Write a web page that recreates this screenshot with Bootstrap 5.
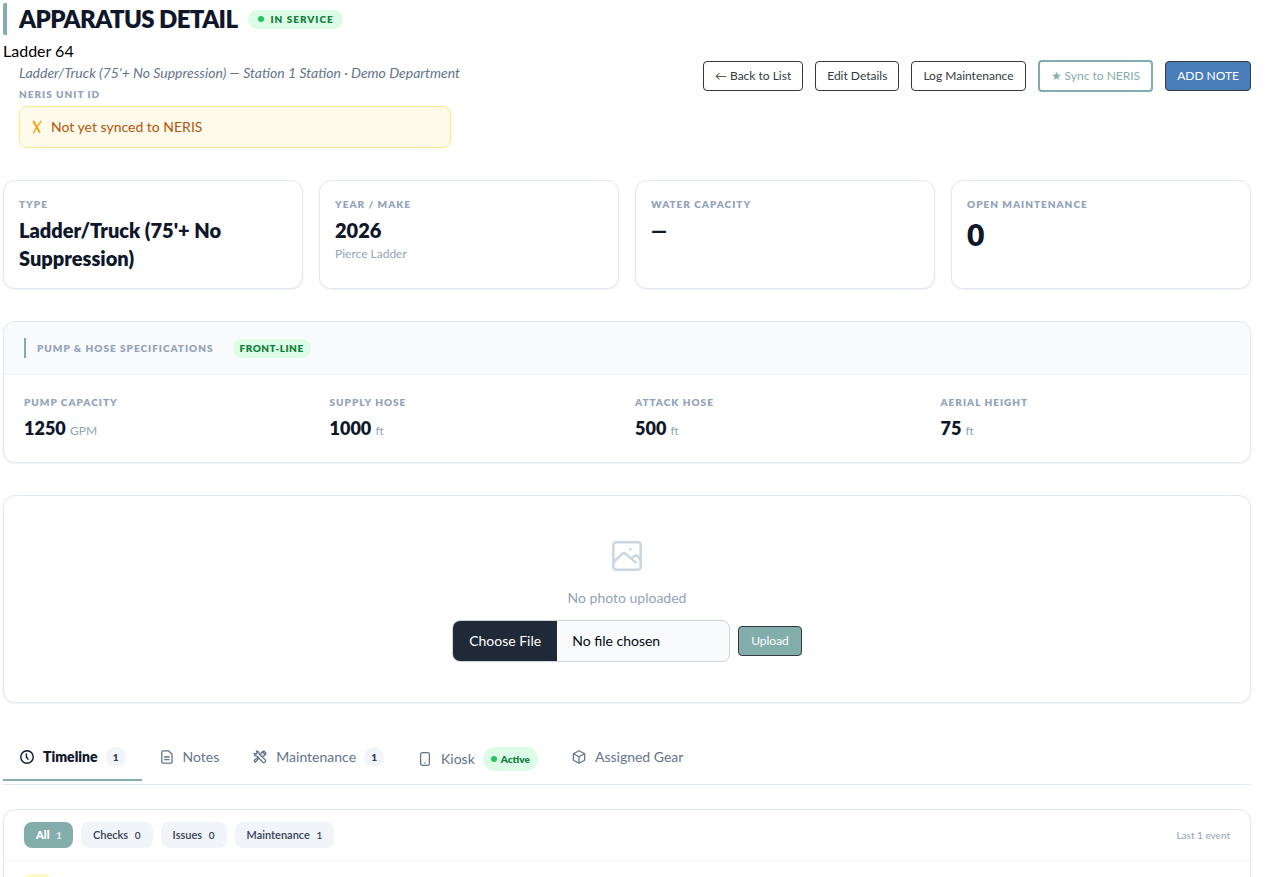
<!DOCTYPE html>
<html lang="en">
<head>
<meta charset="utf-8">
<meta name="viewport" content="width=device-width, initial-scale=1">
<title>Apparatus Detail</title>
<link href="https://cdn.jsdelivr.net/npm/bootstrap@5.3.0/dist/css/bootstrap.min.css" rel="stylesheet">
<style>
  :root { --teal: #83adab; --ink: #0f172a; --slate: #64748b; --muted: #94a3b8; --line: #e2e8f0; }
  body { font-family: Lato, "Liberation Sans", sans-serif; color: #000; height: 100vh; overflow: hidden; }
  .page { padding: 3px 32px 0 3px; height: 100vh; overflow: hidden; }
  .section-gap { margin-top: 32px; }

  .page-title { font-size: 24px; line-height: 32px; font-weight: 800; letter-spacing: -0.6px; color: var(--ink); }
  .title-row { border-left: 4px solid var(--teal); border-radius: 2px; padding-left: 12px; height: 32px; gap: 11px; }
  .indent { padding-left: 16px; }
  .unit-name { font-size: 16px; line-height: 24px; margin-top: 4px; }
  .subtitle { font-size: 14px; line-height: 20px; font-style: italic; color: var(--slate); white-space: nowrap; }
  .eyebrow { font-size: 10px; line-height: 15px; font-weight: 800; letter-spacing: 1px; text-transform: uppercase; color: var(--muted); }
  .pill { background: #dcfce7; color: #15803d; border-radius: 20px; font-weight: 800; font-size: 10px; line-height: 15px; }
  .status { letter-spacing: 1px; padding: 2px 9px 2px 10px; gap: 6px; }
  .dot { width: 6px; height: 6px; border-radius: 50%; background: #22c55e; flex: none; }
  .sync-note { background: #fffbeb; border: 1px solid #fde68a; border-radius: 8px; color: #b45309; font-size: 14px; line-height: 20px; padding: 10px 12px; margin-top: 4px; max-width: 432px; gap: 9px; }
  .actions { gap: 12px; }
  .act { font-size: 12px; line-height: 18px; border: 1px solid #343a40; border-radius: 4px; padding: 5px 12px; color: #343a40; background: #fff; }
  .actions .act { padding: 5px 11px; }
  .act-sync { border: 2px solid var(--teal); color: var(--teal); }
  .act-note { background: #4a7ebb; color: #fff; }
  .act-upload { background: var(--teal); color: #fff; }

  .panel { background: #fff; border: 1px solid var(--line); border-radius: 12px; box-shadow: 0 1px 2px rgba(0,0,0,.06); }
  .stats { gap: 16px; display: grid; grid-template-columns: repeat(4, minmax(0, 1fr)); }
  .stat { padding: 16px 15px; }
  .stat-value { font-size: 20px; line-height: 28px; font-weight: 800; color: var(--ink); margin-top: 4px; }
  .stat-big { font-size: 30px; line-height: 36px; }
  .stat-sub { font-size: 12px; line-height: 20px; color: var(--muted); }

  .spec-head { background: #f8fafc; border-bottom: 1px solid #f1f5f9; border-radius: 12px 12px 0 0; padding: 16px 20px; }
  .spec-title { border-left: 2px solid var(--teal); padding-left: 11px; line-height: 20px; margin-right: 19px; }
  .front { padding: 2px 7px; letter-spacing: .5px; }
  .spec-body { display: grid; grid-template-columns: repeat(4, minmax(0, 1fr)); gap: 16px; padding: 20px; }
  .spec-value { font-size: 18px; line-height: 28px; font-weight: 800; color: var(--ink); margin-top: 4px; }
  .spec-value span { font-size: 12px; font-weight: 400; color: var(--muted); line-height: 16px; }

  .photo { padding: 40px 0; }
  .photo-text { font-size: 14px; line-height: 20px; color: var(--muted); margin: 12px 0; }
  .file-pick { width: 278px; height: 42px; padding: 9px 16px; font-size: 14px; line-height: 22px; border: 1px solid #d1d5db; border-radius: 8px; background: #f8fafc; color: #030712; }
  .file-pick::file-selector-button { background: #1f2937 !important; color: #fff; padding: 9px 16px; margin: -9px 15px -9px -16px; border: 0; }

  .tab-bar { border-bottom: 1px solid var(--line); height: 50px; gap: 1px; }
  .tab { border: 0; border-bottom: 2px solid transparent; background: none; font-size: 14px; line-height: 20px; color: var(--slate); padding: 0 16px; height: 46px; display: flex; align-items: center; }
  .tab.on { color: var(--ink); font-weight: 800; border-bottom-color: var(--teal); }
  .tab.tall { height: 50px; }
  .tab svg { margin-right: 8px; flex: none; }
  .count { min-width: 20px; height: 20px; border-radius: 10px; background: #f1f5f9; color: #334155; font-size: 10px; font-weight: 800; margin-left: 8px; text-align: center; }
  .active-pill { padding: 4px 8px; gap: 4px; margin-left: 8px; height: 24px; }

  .timeline { margin-top: 24px; }
  .filters { padding: 12px 20px; border-bottom: 1px solid #f1f5f9; }
  .chip { border: 0; border-radius: 8px; background: #f1f5f9; color: #334155; font-size: 11px; line-height: 17px; font-weight: 600; padding: 4px 12px; }
  .chip span { font-size: 10px; margin-left: 4px; }
  .chip.on { background: var(--teal); color: #fff; font-weight: 800; padding: 4px 11px 4px 12px; }
  .chip.on span { opacity: .7; }
  .last { font-size: 10px; line-height: 15px; color: var(--muted); }
  .events { padding: 13px 20px; }
  .event-mark { width: 28px; height: 28px; border-radius: 8px; background: #fef9c3; }
</style>
</head>
<body>
<main class="page">
  <header class="d-flex justify-content-between align-items-center">
    <div>
      <div class="title-row d-flex align-items-center">
        <h1 class="page-title m-0">APPARATUS DETAIL</h1>
        <span class="pill status d-inline-flex align-items-center"><i class="dot"></i>IN SERVICE</span>
      </div>
      <div class="unit-name">Ladder 64</div>
      <div class="indent">
        <div class="subtitle">Ladder/Truck (75'+ No Suppression) — Station 1 Station · Demo Department</div>
        <div class="eyebrow mt-1">NERIS Unit ID</div>
        <div class="sync-note d-flex align-items-center"><svg width="10" height="14" viewBox="0 0 10 14" fill="none" stroke="#f59e0b" stroke-linecap="round" aria-hidden="true"><path d="M1.6 1.6C3 4 5.5 9 7.6 12" stroke-width="1.9"/><path d="M9.2 1.4C6.5 4.5 3 9 1.6 13" stroke-width="1.4"/></svg>Not yet synced to NERIS</div>
      </div>
    </div>
    <div class="d-flex align-items-center actions">
      <a href="#" class="btn act">← Back to List</a>
      <a href="#" class="btn act">Edit Details</a>
      <a href="#" class="btn act">Log Maintenance</a>
      <button type="button" class="btn act act-sync">★ Sync to NERIS</button>
      <button type="button" class="btn act act-note">ADD NOTE</button>
    </div>
  </header>

  <section class="stats section-gap">
    <div class="panel stat"><div class="eyebrow">Type</div><div class="stat-value">Ladder/Truck (75'+ No Suppression)</div></div>
    <div class="panel stat"><div class="eyebrow">Year / Make</div><div class="stat-value">2026</div><div class="stat-sub">Pierce Ladder</div></div>
    <div class="panel stat"><div class="eyebrow">Water Capacity</div><div class="stat-value">—</div></div>
    <div class="panel stat"><div class="eyebrow">Open Maintenance</div><div class="stat-value stat-big">0</div></div>
  </section>

  <section class="panel section-gap">
    <div class="spec-head d-flex align-items-center">
      <h2 class="eyebrow spec-title mb-0">Pump &amp; Hose Specifications</h2>
      <span class="pill front">FRONT-LINE</span>
    </div>
    <div class="spec-body">
      <div><div class="eyebrow">Pump Capacity</div><div class="spec-value">1250 <span>GPM</span></div></div>
      <div><div class="eyebrow">Supply Hose</div><div class="spec-value">1000 <span>ft</span></div></div>
      <div><div class="eyebrow">Attack Hose</div><div class="spec-value">500 <span>ft</span></div></div>
      <div><div class="eyebrow">Aerial Height</div><div class="spec-value">75 <span>ft</span></div></div>
    </div>
  </section>

  <section class="panel photo section-gap d-flex flex-column align-items-center">
    <svg width="40" height="40" viewBox="0 0 24 24" fill="none" stroke="#cbd5e1" stroke-width="1.5" stroke-linecap="round" stroke-linejoin="round" aria-hidden="true"><rect x="3.8" y="3.8" width="16.4" height="16.4" rx="1.7"/><path d="M4 15.6l4.9-4.7a1.9 1.9 0 0 1 2.6 0l5.6 4.9M14.6 13.6l1.3-1.2a1.9 1.9 0 0 1 2.6 0l1.6 1.8"/><path d="M14 7.9h.01"/></svg>
    <div class="photo-text">No photo uploaded</div>
    <form class="d-flex align-items-center gap-2">
      <input type="file" class="form-control file-pick" aria-label="Apparatus photo">
      <button type="button" class="btn act act-upload">Upload</button>
    </form>
  </section>

  <nav class="tab-bar d-flex section-gap">
    <button type="button" class="tab on"><svg width="16" height="16" viewBox="0 0 16 16" fill="none" stroke="currentColor" stroke-width="1.4" stroke-linecap="round" stroke-linejoin="round"><circle cx="8" cy="8" r="6.2"/><path d="M7.4 5v3l1.6 2.2"/></svg>Timeline<span class="count">1</span></button>
    <button type="button" class="tab"><svg width="16" height="16" viewBox="0 0 16 16" fill="none" stroke="currentColor" stroke-width="1.3" stroke-linecap="round" stroke-linejoin="round"><path d="M9.5 1.8H4.2a1.4 1.4 0 0 0-1.4 1.4v9.6a1.4 1.4 0 0 0 1.4 1.4h7.4a1.4 1.4 0 0 0 1.4-1.4V5.3zM5.6 8h4.6M5.6 10.7h4.6"/></svg>Notes</button>
    <button type="button" class="tab"><svg width="16" height="16" viewBox="0 0 16 16" fill="none" stroke="currentColor" stroke-width="1.3" stroke-linecap="round" stroke-linejoin="round"><path d="M2.2 4.4L4 5.2 5.2 4 4.4 2.2c1.7-.2 3 1.2 2.7 2.8l5.9 5.6c1.6 1.6-.8 4-2.4 2.4L5 7.1C3.400 7.400 2 6.100 2.200 4.400zM8.800 6L8.900 4.200l2.100-2 1.500.2-1.400 1.500 1 1 1.500-1.400.2 1.500-2 2.100L10 7.200M7 9l-3.600 4.200M3.400 13.200a1.400 1.400 0 0 1-.8-2.200L6.200 8.200"/></svg>Maintenance<span class="count">1</span></button>
    <button type="button" class="tab tall"><svg width="16" height="16" viewBox="0 0 16 16" fill="none" stroke="currentColor" stroke-width="1.3" stroke-linecap="round"><rect x="3.6" y="1.6" width="8.8" height="12.8" rx="1.8"/><path d="M7.5 12h1" stroke-width="1"/></svg>Kiosk<span class="pill d-inline-flex align-items-center active-pill"><i class="dot"></i>Active</span></button>
    <button type="button" class="tab"><svg width="16" height="16" viewBox="0 0 16 16" fill="none" stroke="currentColor" stroke-width="1.3" stroke-linejoin="round"><path d="M8 1.8l5.600 3v6.400L8 14.200l-5.600-3V4.800zM2.400 4.800L8 7.800l5.600-3M8 7.800v6.400"/></svg>Assigned Gear</button>
  </nav>

  <section class="panel timeline">
    <div class="filters d-flex align-items-center gap-2">
      <button type="button" class="chip on">All <span>1</span></button>
      <button type="button" class="chip">Checks <span>0</span></button>
      <button type="button" class="chip">Issues <span>0</span></button>
      <button type="button" class="chip">Maintenance <span>1</span></button>
      <span class="last ms-auto">Last 1 event</span>
    </div>
    <div class="events"><div class="event-mark"></div></div>
  </section>
</main>
<script src="https://cdn.jsdelivr.net/npm/bootstrap@5.3.0/dist/js/bootstrap.bundle.min.js"></script>
</body>
</html>
